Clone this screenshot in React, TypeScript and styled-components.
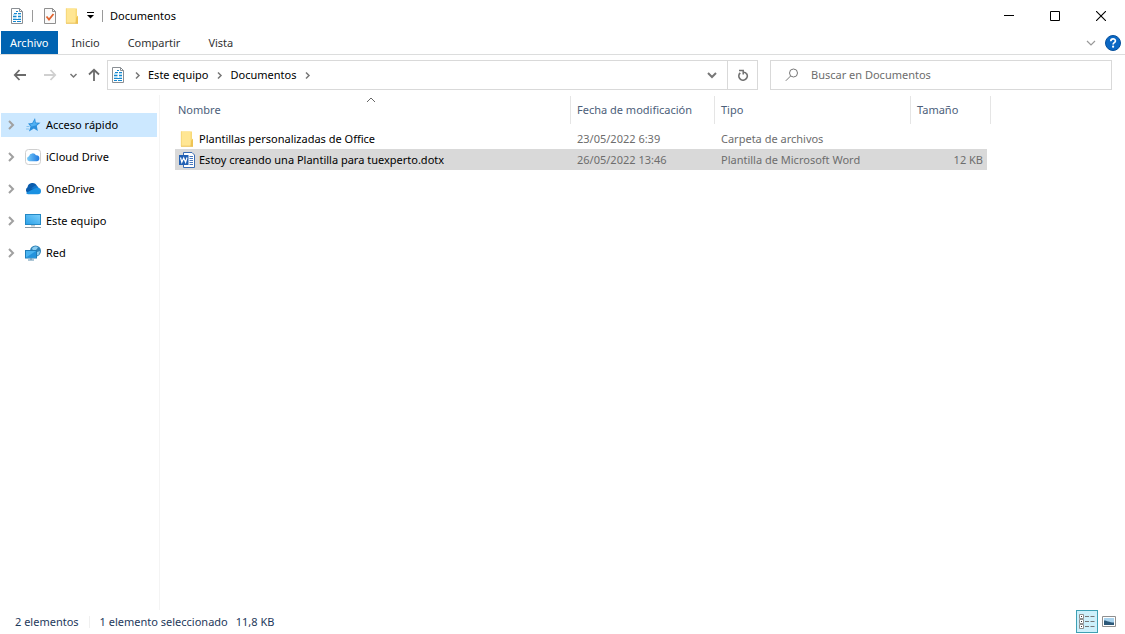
import React from "react";
import styled, { createGlobalStyle } from "styled-components";

const GlobalStyle = createGlobalStyle`
  * { box-sizing: border-box; }
  body { margin: 0; background: #fff; }
  body, button, input, table {
    font-family: "Noto Sans", "Open Sans", "Liberation Sans", sans-serif;
    font-size: 11px;
    line-height: 16px;
    color: #000;
  }
  svg { display: block; flex: none; }
`;

const Window = styled.div`
  display: flex;
  flex-direction: column;
  min-height: 100vh;
`;

const PlainButton = styled.button`
  display: flex;
  align-items: center;
  justify-content: center;
  padding: 0;
  border: 0;
  background: transparent;
`;

const TitleBar = styled.header`
  display: flex;
  align-items: center;
  height: 31px;
  padding: 0 1px 0 9px;
`;

const QuickAccess = styled.div`
  display: flex;
  align-items: center;
  gap: 6px;
  margin-left: 2px;
`;

const Divider = styled.span<{ $faint?: boolean }>`
  width: 1px;
  height: 12px;
  margin: 0 ${(p) => (p.$faint ? 10 : 7)}px;
  background: ${(p) => (p.$faint ? "#f0f0f0" : "#9a9a9a")};
`;

const Title = styled.h1`
  flex: 1;
  margin: 0;
  font-size: 11px;
  font-weight: 400;
`;

const WindowButton = styled(PlainButton)`
  width: 46px;
  height: 30px;
`;

const Ribbon = styled.nav`
  display: flex;
  align-items: center;
  height: 24px;
  padding: 0 4px 0 1px;
  border-bottom: 1px solid #dcdddd;
`;

const Tab = styled.button<{ $primary?: boolean }>`
  align-self: stretch;
  padding: 0 ${(p) => (p.$primary ? 9 : 14)}px;
  border: 0;
  color: ${(p) => (p.$primary ? "#fff" : "#333")};
  background: ${(p) => (p.$primary ? "#0063b1" : "transparent")};
`;

const Spacer = styled.div`
  flex: 1;
`;

const HelpButton = styled(PlainButton)`
  margin-left: 8px;
`;

const NavigationBar = styled.div`
  display: flex;
  align-items: center;
  height: 40px;
  padding: 0 13px 0 12px;
`;

const HistoryButtons = styled.div`
  display: flex;
  align-items: center;
  flex: none;
  width: 95px;
`;

const HistoryButton = styled(PlainButton)<{ $after?: number }>`
  margin-right: ${(p) => p.$after ?? 0}px;
`;

const AddressBox = styled.div`
  display: flex;
  align-items: center;
  flex: 2 1 651px;
  height: 30px;
  padding-left: 2px;
  border: 1px solid #d9d9d9;
`;

const Crumb = styled.a`
  color: #000;
  text-decoration: none;
  white-space: nowrap;
`;

const CrumbArrow = styled.span`
  display: flex;
  justify-content: center;
  width: 22px;
`;

const AddressButton = styled(PlainButton)<{ $ruled?: boolean }>`
  width: 30px;
  height: 28px;
  border-left: ${(p) => (p.$ruled ? "1px solid #d9d9d9" : "0")};
`;

const SearchBox = styled.label`
  display: flex;
  align-items: center;
  flex: 1 1 342px;
  height: 30px;
  margin-left: 12px;
  padding-left: 14px;
  border: 1px solid #d9d9d9;
`;

const SearchInput = styled.input`
  flex: 1;
  min-width: 0;
  margin-left: 12px;
  padding: 0;
  border: 0;
  outline: 0;
  background: transparent;
  &::placeholder { color: #6d6d6d; opacity: 1; }
`;

const Body = styled.div`
  display: flex;
  flex: 1;
`;

const Sidebar = styled.nav`
  flex: none;
  display: flex;
  flex-direction: column;
  gap: 8px;
  width: 160px;
  padding: 18px 2px 0 1px;
  border-right: 1px solid #f4f4f4;
`;

const Place = styled.a<{ $selected?: boolean }>`
  display: flex;
  align-items: center;
  height: 24px;
  padding-left: 4px;
  color: #000;
  text-decoration: none;
  background: ${(p) => (p.$selected ? "#cce8ff" : "transparent")};
`;

const PlaceIcon = styled.span`
  margin: 0 5px 0 8px;
`;

const Files = styled.main`
  flex: 1;
  min-width: 0;
  padding: 1px 0 0 15px;
`;

const FileTable = styled.table`
  width: 816px;
  table-layout: fixed;
  border-spacing: 0;
`;

const Column = styled.col<{ $width?: number }>`
  width: ${(p) => (p.$width ? `${p.$width}px` : "auto")};
`;

const HeadCell = styled.th<{ $first?: boolean }>`
  position: relative;
  height: 28px;
  padding: 0 0 0 ${(p) => (p.$first ? 3 : 6)}px;
  border-right: 1px solid #e5e5e5;
  font-weight: 400;
  text-align: left;
  color: #4c607a;
`;

const SortMark = styled.span`
  position: absolute;
  top: -2px;
  left: calc(50% - 8px);
`;

const FileRows = styled.tbody`
  &::before {
    content: "";
    display: block;
    height: 4px;
  }
`;

const FileRow = styled.tr<{ $selected?: boolean }>`
  background: ${(p) => (p.$selected ? "#d9d9d9" : "transparent")};
`;

const Cell = styled.td<{ $numeric?: boolean }>`
  height: 21px;
  padding: 0 ${(p) => (p.$numeric ? 4 : 0)}px 0 6px;
  border-right: ${(p) => (p.$numeric ? "4px solid #fff" : "0")};
  text-align: ${(p) => (p.$numeric ? "right" : "left")};
  white-space: nowrap;
  color: #6d6d6d;
`;

const NameCell = styled(Cell)`
  padding-left: 4px;
  color: #000;
`;

const FileName = styled.span`
  display: flex;
  align-items: center;
  gap: 4px;
`;

const StatusBar = styled.footer`
  display: flex;
  align-items: center;
  height: 24px;
  padding: 0 5px 1px 15px;
  color: #1e395b;
`;

const StatusText = styled.span<{ $after?: number }>`
  margin-right: ${(p) => p.$after ?? 0}px;
`;

const ViewButton = styled(PlainButton)<{ $active?: boolean }>`
  width: 22px;
  height: 23px;
  border: ${(p) => (p.$active ? "1px solid #3ea0b4" : "0")};
  background: ${(p) => (p.$active ? "#cdf0fb" : "transparent")};
`;

const DocumentIcon = () => (
  <svg width="16" height="16" viewBox="0 0 16 16">
    <path d="M2.5 .5h8l3 3v12h-11z" fill="#fff" stroke="#8a8f94" />
    <path d="M10.500 .5v3h3" fill="none" stroke="#8a8f94" />
    <path d="M7 3.500h2M5 5.500h3M9 5.500h3M4 8.500h3.500M9 8.500h3M4 11.500h8M4 13.500h3M8 13.500h4" stroke="#1688cf" />
    <path d="M4 7h3.500M9 7h3M4 10h3.500M9 10h3" stroke="#70bde8" />
  </svg>
);

const PropertiesIcon = () => (
  <svg width="16" height="16" viewBox="0 0 16 16">
    <path d="M2.500 .5h8l3 3v12h-11z" fill="#fafafa" stroke="#8f8f8f" />
    <path d="M10.500 .5v3h3" fill="none" stroke="#8f8f8f" />
    <path d="M4.500 8.500l2.500 3 4.500-5.500" fill="none" stroke="#e0632f" strokeWidth="1.800" />
  </svg>
);

const FolderIcon = () => (
  <svg width="16" height="16" viewBox="0 0 16 16">
    <path d="M2 .5h11v7l1 1V15.500H2z" fill="#f8d978" />
    <path d="M2 .5h9.500v15H2z" fill="#ffe693" />
    <path d="M11.500 15.500l.7-6 1.800-1.500v7.500z" fill="#efc454" />
    <path d="M2 15.200h12" stroke="#e6bd56" strokeWidth=".8" />
    <path d="M2.300 .5V15" stroke="#f1ce6c" strokeWidth=".7" />
  </svg>
);

const WordIcon = () => (
  <svg width="16" height="16" viewBox="0 0 16 16">
    <path d="M4.500 .5h8.500l2.500 2.500v12.500h-11z" fill="#fff" stroke="#3a6cb3" />
    <path d="M10.500 4.500h3.500M10.500 6.500h3.500M10.500 8.500h3.500M10.500 10.500h3.500M10.500 12.500h3.500" stroke="#4776bb" />
    <path d="M0 3h9.500v10H0z" fill="#2160b4" />
    <path d="M1.500 5.500l1.300 4.700L4.700 6l1.900 4.200L8 5.500" fill="none" stroke="#fff" strokeWidth="1.200" />
  </svg>
);

const Chevron = ({ dir, size, color, weight = 1 }: { dir: "right" | "down" | "up"; size: number; color: string; weight?: number }) => {
  const paths = { right: "M4 2l4 4-4 4", down: "M2 4l4 4 4-4", up: "M2 8l4-4 4 4" };
  return (
    <svg width={size} height={size} viewBox="0 0 12 12">
      <path d={paths[dir]} fill="none" stroke={color} strokeWidth={weight} />
    </svg>
  );
};

const Arrow = ({ turn = 0, color }: { turn?: number; color: string }) => (
  <svg width="16" height="16" viewBox="0 0 16 16">
    <path d="M14 8H3M7.500 3L2.800 8l4.700 5" fill="none" stroke={color} strokeWidth="1.800" transform={`rotate(${turn} 8 8)`} />
  </svg>
);

const StarIcon = () => (
  <svg width="16" height="16" viewBox="0 0 16 16">
    <path d="M10 1l.8 4.500 4.700.3-3.700 2.900 1 5.300-3.900-2.500L4 14.500l1.500-5L3 6.500l4.200-.5z" fill="#2a8fdc" />
    <path d="M9.600 3l.5 3.300 2.900.2-2.500 1.900-4 1.100-1.500-2.200 2.700-.5z" fill="#4fb0f2" />
    <path d="M1.500 9.500h3M1 12h3" stroke="#72b9ea" strokeWidth=".8" />
  </svg>
);

const CloudDriveIcon = () => (
  <svg width="16" height="16" viewBox="0 0 16 16">
    <defs>
      <linearGradient id="cloud" x1="0" x2="1">
        <stop offset="0" stopColor="#78ccf8" />
        <stop offset="1" stopColor="#1e78e0" />
      </linearGradient>
    </defs>
    <rect x=".5" y=".5" width="15" height="15" rx="3" fill="#fff" stroke="#cfcfcf" />
    <path d="M4.300 12.300a2.600 2.600 0 0 1-.3-5.100A3.800 3.800 0 0 1 11 6.300a3 3 0 0 1 .7 6z" fill="url(#cloud)" />
  </svg>
);

const OneDriveIcon = () => (
  <svg width="16" height="16" viewBox="0 0 16 16">
    <path d="M3.500 12.500A3.500 3.500 0 0 1 2.500 6.200 5 5 0 0 1 12 5l-5 6.500z" fill="#0a5cad" />
    <path d="M6 7.500l4-3a4 4 0 0 1 3.800 3L15 9z" fill="#1276cc" />
    <path d="M1 12l6.500-3.500L11 7c3-.6 5 .8 5 3s-1.200 3.300-3 3.300H4c-1.200 0-2.400-.4-3-1.300z" fill="#1a91e2" />
  </svg>
);

const ComputerIcon = () => (
  <svg width="16" height="16" viewBox="0 0 16 16">
    <defs>
      <linearGradient id="screen" x1="0" y1="1" x2="1" y2="0">
        <stop offset="0" stopColor="#2aa0e8" />
        <stop offset="1" stopColor="#7ccffb" />
      </linearGradient>
    </defs>
    <rect x=".5" y="1.500" width="15" height="10" fill="url(#screen)" stroke="#2488c4" />
    <path d="M6 12h4v1.500H6z" fill="#b8c4cc" />
    <path d="M0 14.500h16" stroke="#8b9aa5" />
  </svg>
);

const NetworkIcon = () => (
  <svg width="16" height="16" viewBox="0 0 16 16">
    <circle cx="10.500" cy="6" r="5.500" fill="#2f83b8" />
    <path d="M7 3.500C9 1 12 1 13 2.500L11 5 8 5.500zM12 7l3-1-1 3.500-2 1z" fill="#8ccdf0" />
    <rect x=".5" y="5.500" width="11" height="7.500" fill="#49b3f0" stroke="#1f7db8" />
    <path d="M1 12.500L11 6v6.500z" fill="#2493dc" />
    <path d="M3 15h6M6 13v2" stroke="#5f8fae" />
  </svg>
);

const RefreshIcon = () => (
  <svg width="12" height="12" viewBox="0 0 12 12">
    <path d="M9.400 4.400A4.200 4.200 0 1 1 3.200 3.900" fill="none" stroke="#707070" strokeWidth="1.700" />
    <path d="M2 1.500h4.200v4" fill="none" stroke="#707070" strokeWidth="1.500" />
    <path d="M6.500 3.200c1.300 0 2.400.6 3.100 1.600" fill="none" stroke="#707070" strokeWidth="1.500" />
  </svg>
);

const places = [
  { label: "Acceso rápido", icon: <StarIcon />, selected: true },
  { label: "iCloud Drive", icon: <CloudDriveIcon /> },
  { label: "OneDrive", icon: <OneDriveIcon /> },
  { label: "Este equipo", icon: <ComputerIcon /> },
  { label: "Red", icon: <NetworkIcon /> },
];

const files = [
  { name: "Plantillas personalizadas de Office", date: "23/05/2022 6:39", type: "Carpeta de archivos", size: "", icon: <FolderIcon /> },
  { name: "Estoy creando una Plantilla para tuexperto.dotx", date: "26/05/2022 13:46", type: "Plantilla de Microsoft Word", size: "12 KB", icon: <WordIcon />, selected: true },
];

export default function App() {
  return (
    <Window>
      <GlobalStyle />
      <TitleBar>
        <DocumentIcon />
        <Divider />
        <QuickAccess>
          <PlainButton aria-label="Propiedades"><PropertiesIcon /></PlainButton>
          <PlainButton aria-label="Nueva carpeta"><FolderIcon /></PlainButton>
          <PlainButton aria-label="Personalizar">
            <svg width="9" height="9" viewBox="0 0 9 9">
              <path d="M1 1.500h7" stroke="#000" />
              <path d="M1 4h7L4.500 7.500z" fill="#000" />
            </svg>
          </PlainButton>
        </QuickAccess>
        <Divider />
        <Title>Documentos</Title>
        <WindowButton aria-label="Minimizar">
          <svg width="10" height="10"><path d="M0 4.500h10" stroke="#000" /></svg>
        </WindowButton>
        <WindowButton aria-label="Maximizar">
          <svg width="10" height="10"><path d="M.5 .5h9v9h-9z" fill="none" stroke="#000" /></svg>
        </WindowButton>
        <WindowButton aria-label="Cerrar">
          <svg width="10" height="10"><path d="M0 0l10 10M10 0L0 10" stroke="#000" strokeWidth="1.100" /></svg>
        </WindowButton>
      </TitleBar>

      <Ribbon>
        <Tab $primary>Archivo</Tab>
        <Tab>Inicio</Tab>
        <Tab>Compartir</Tab>
        <Tab>Vista</Tab>
        <Spacer />
        <PlainButton aria-label="Expandir cinta">
          <Chevron dir="down" size={12} color="#999" weight={1.2} />
        </PlainButton>
        <HelpButton aria-label="Ayuda">
          <svg width="16" height="16" viewBox="0 0 16 16">
            <circle cx="8" cy="8" r="7.500" fill="#0b68c4" stroke="#07509c" />
            <path d="M5.800 6.200c0-3 4.600-3 4.600-.3 0 1.800-2.300 1.700-2.300 3.600" fill="none" stroke="#fff" strokeWidth="1.700" />
            <circle cx="8.100" cy="11.700" r="1.100" fill="#fff" />
          </svg>
        </HelpButton>
      </Ribbon>

      <NavigationBar>
        <HistoryButtons>
          <HistoryButton aria-label="Atrás" $after={14}><Arrow color="#6b6b6b" /></HistoryButton>
          <HistoryButton aria-label="Adelante" $after={11}><Arrow color="#d0d0d0" turn={180} /></HistoryButton>
          <HistoryButton aria-label="Recientes" $after={8}><Chevron dir="down" size={9} color="#777" weight={2} /></HistoryButton>
          <HistoryButton aria-label="Subir"><Arrow color="#6b6b6b" turn={90} /></HistoryButton>
        </HistoryButtons>
        <AddressBox>
          <DocumentIcon />
          <CrumbArrow><Chevron dir="right" size={9} color="#777" weight={2} /></CrumbArrow>
          <Crumb href="#equipo">Este equipo</Crumb>
          <CrumbArrow><Chevron dir="right" size={9} color="#777" weight={2} /></CrumbArrow>
          <Crumb href="#documentos">Documentos</Crumb>
          <CrumbArrow><Chevron dir="right" size={9} color="#777" weight={2} /></CrumbArrow>
          <Spacer />
          <AddressButton aria-label="Ubicaciones anteriores"><Chevron dir="down" size={12} color="#777" weight={2} /></AddressButton>
          <AddressButton aria-label="Actualizar" $ruled><RefreshIcon /></AddressButton>
        </AddressBox>
        <SearchBox>
          <svg width="14" height="14" viewBox="0 0 14 14">
            <circle cx="8.500" cy="5" r="4" fill="none" stroke="#777" />
            <path d="M5.600 8L.8 12.800" stroke="#777" />
          </svg>
          <SearchInput type="text" aria-label="Buscar en Documentos" placeholder="Buscar en Documentos" />
        </SearchBox>
      </NavigationBar>

      <Body>
        <Sidebar>
          {places.map((p) => (
            <Place key={p.label} href="#" $selected={p.selected}>
              <Chevron dir="right" size={12} color="#a0a0a0" weight={2} />
              <PlaceIcon>{p.icon}</PlaceIcon>
              {p.label}
            </Place>
          ))}
        </Sidebar>
        <Files>
          <FileTable>
            <colgroup>
              <Column />
              <Column $width={144} />
              <Column $width={196} />
              <Column $width={80} />
            </colgroup>
            <thead>
              <tr>
                <HeadCell $first>
                  Nombre
                  <SortMark><Chevron dir="up" size={12} color="#666" /></SortMark>
                </HeadCell>
                <HeadCell>Fecha de modificación</HeadCell>
                <HeadCell>Tipo</HeadCell>
                <HeadCell>Tamaño</HeadCell>
              </tr>
            </thead>
            <FileRows>
              {files.map((f) => (
                <FileRow key={f.name} $selected={f.selected}>
                  <NameCell><FileName>{f.icon}{f.name}</FileName></NameCell>
                  <Cell>{f.date}</Cell>
                  <Cell>{f.type}</Cell>
                  <Cell $numeric>{f.size}</Cell>
                </FileRow>
              ))}
            </FileRows>
          </FileTable>
        </Files>
      </Body>

      <StatusBar>
        <StatusText>2 elementos</StatusText>
        <Divider $faint />
        <StatusText $after={8}>1 elemento seleccionado</StatusText>
        <StatusText>11,8 KB</StatusText>
        <Spacer />
        <ViewButton aria-label="Detalles" $active>
          <svg width="16" height="15" viewBox="0 0 16 15">
            <path d="M.5 .5h4v4h-4zM.5 5.500h4v4h-4zM.5 10.500h4v4h-4z" fill="#fff" stroke="#8f8f8f" />
            <path d="M2 2.500h1M2 7.500h1M2 12.500h1" stroke="#333" />
            <path d="M6 2.500h4M11.500 2.500h4M6 7.500h4M11.500 7.500h4M6 12.500h4M11.500 12.500h4" stroke="#777" />
          </svg>
        </ViewButton>
        <ViewButton aria-label="Iconos grandes">
          <svg width="14" height="11" viewBox="0 0 14 11">
            <path d="M.5 .5h13v10H.5z" fill="#fff" stroke="#8f8f8f" />
            <path d="M2 2h10v7H2z" fill="#a9d3ee" />
            <path d="M2 4.500c3 0 5 2 10 2V9H2z" fill="#2c5878" />
          </svg>
        </ViewButton>
      </StatusBar>
    </Window>
  );
}
